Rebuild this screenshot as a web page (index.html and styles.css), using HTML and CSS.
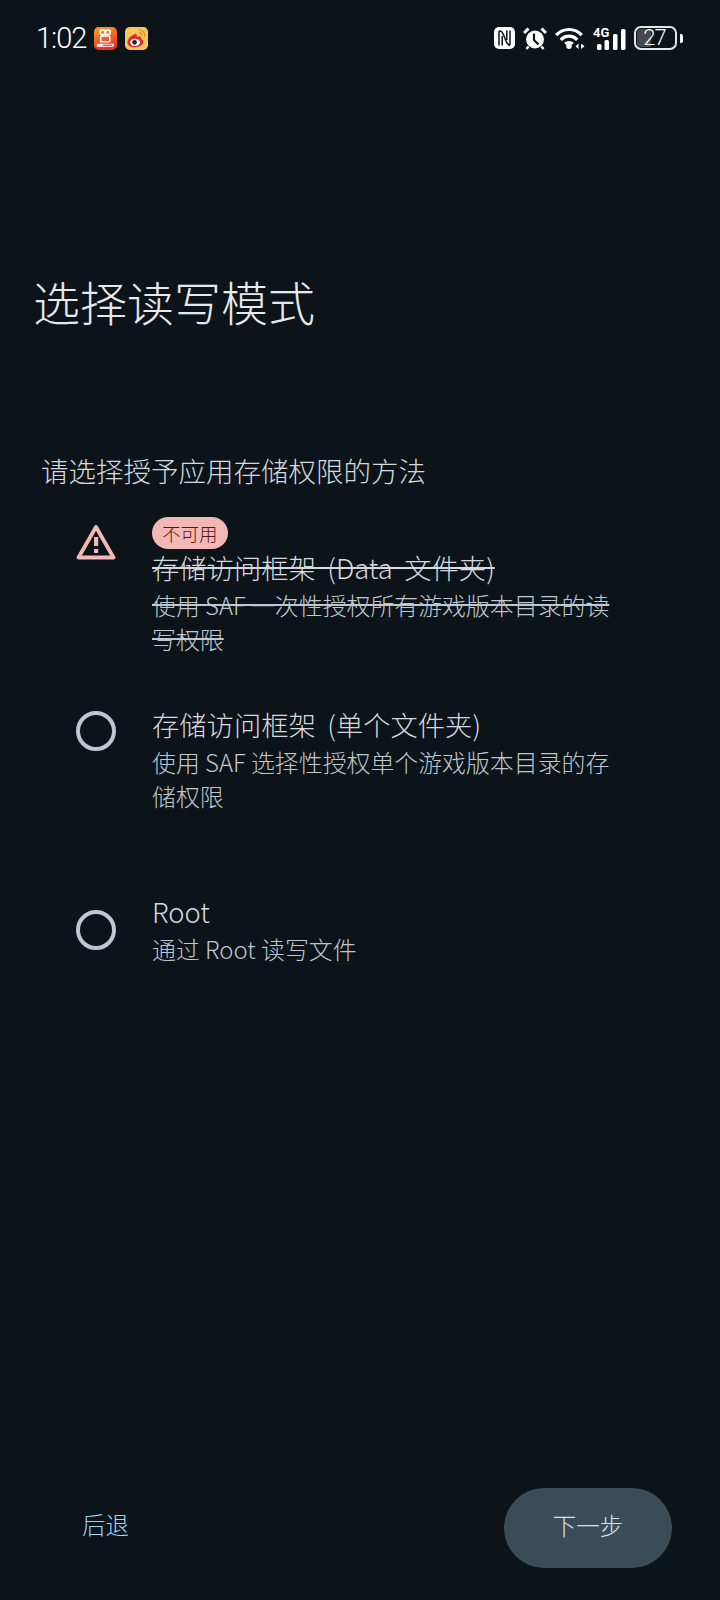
FILE: index.html
```html
<!DOCTYPE html>
<html lang="zh-CN">
<head>
<meta charset="utf-8">
<title>选择读写模式</title>
<link rel="stylesheet" href="styles.css">
</head>
<body>
<div class="screen">
  <header class="status">
    <div class="status-left">
      <span class="time">1:02</span>
      <svg class="app-icon" viewBox="0 0 24 24">
        <defs><linearGradient id="kg" x1="0" y1="0" x2="0.3" y2="1"><stop offset="0" stop-color="#f8a423"/><stop offset="1" stop-color="#e5322e"/></linearGradient></defs>
        <rect width="24" height="24" rx="5" fill="url(#kg)"/>
        <circle cx="9" cy="5.500" r="2.500" fill="none" stroke="#fff" stroke-width="1.600"/>
        <circle cx="14.500" cy="5.500" r="2.500" fill="none" stroke="#fff" stroke-width="1.600"/>
        <rect x="7" y="9.500" width="9.500" height="6" rx="1" fill="none" stroke="#fff" stroke-width="1.600"/>
        <path d="M3 17.500h18l-1 3H3z" fill="#fff"/>
        <path d="M9 19h10" stroke="#d9342c" stroke-width="1.200"/>
      </svg>
      <svg class="app-icon" viewBox="0 0 24 24">
        <rect width="24" height="24" rx="5" fill="#f7c65c"/>
        <path d="M10 7.500c-4 1.500-7.500 5-7.500 8.500 0 3.200 3.500 5.200 8 5.200s8.800-2.700 8.800-5.700c0-2-2-2.500-2.500-3 .5-1.500 0-3-3-2.500-1 .2-1.500.5-1.500-.5 0-2-.8-3-1.800-2z" fill="#e6272d"/>
        <ellipse cx="10.500" cy="16" rx="5.200" ry="3.800" fill="#fff"/>
        <circle cx="10" cy="16" r="2.400" fill="#222"/>
        <path d="M14.500 3c3.800-.2 6.800 3 6 7M14.500 6c2.200 0 3.700 1.700 3.200 3.800" fill="none" stroke="#e8921f" stroke-width="1.400"/>
      </svg>
    </div>
    <div class="status-right">
      <svg class="ic-nfc" viewBox="0 0 21 22">
        <rect width="21" height="22" rx="5" fill="#fff"/>
        <path d="M5 4v14.500M16 3.500V18M5 4c3 0 3.500 1.500 5 5l2 5c.8 2 2 4 4 4.500M8.200 9v9.500M12.800 3.500V13" fill="none" stroke="#0c1319" stroke-width="1.500"/>
      </svg>
      <svg class="ic-alarm" viewBox="0 0 24 23">
        <circle cx="12" cy="12.500" r="9" fill="#fff"/>
        <path d="M11 6.500v6.500l4.500 4.500" fill="none" stroke="#0c1319" stroke-width="2.200"/>
        <path d="M1 6 5.500 1.500M23 6 18.500 1.500" stroke="#fff" stroke-width="3" fill="none"/>
        <path d="M5.500 19.500 3.500 22M18.500 19.500l2 2.500" stroke="#fff" stroke-width="2.400" fill="none"/>
      </svg>
      <svg class="ic-wifi" viewBox="0 0 30 22">
        <path d="M1.200 8.200C8.200.6 19.800.6 26.800 8.200M5.800 12.800c4.500-4.800 11.900-4.800 16.400 0M10.300 17c2-2 5.400-2 7.400 0" fill="none" stroke="#fff" stroke-width="3.200"/>
        <circle cx="14" cy="19.300" r="2.700" fill="#fff"/>
        <path d="M23.500 16.500 20.500 19.300l3 2.700zM26 16.500l3.500 2.800L26 22z" fill="#fff"/>
      </svg>
      <div class="signal">
        <span class="net">4G</span>
        <svg class="ic-bars" viewBox="0 0 29 21">
          <rect x="0" y="15" width="4.500" height="6" rx="1.500" fill="#fff"/>
          <rect x="7.500" y="11" width="4.500" height="10" rx="1.500" fill="#fff"/>
          <rect x="16" y="5" width="4.500" height="16" rx="1.500" fill="#fff"/>
          <rect x="24" y="0" width="4.500" height="21" rx="1.500" fill="#fff"/>
        </svg>
      </div>
      <div class="battery">
        <div class="cell"><span class="level"></span><span class="pct">27</span></div>
        <span class="nub"></span>
      </div>
    </div>
  </header>

  <main class="content">
    <h1 class="title">选择读写模式</h1>
    <p class="subtitle">请选择授予应用存储权限的方法</p>
    <ul class="options">
      <li class="option disabled">
        <svg class="warn" viewBox="0 0 40 36">
          <path d="M20 3 37.500 33.500H2.500z" fill="none" stroke="#f2b8b5" stroke-width="3.800" stroke-linejoin="round"/>
          <rect x="18" y="13" width="4.200" height="9" fill="#f2b8b5"/>
          <rect x="18" y="25" width="4.200" height="4" fill="#f2b8b5"/>
        </svg>
        <div class="body">
          <span class="badge">不可用</span>
          <div class="name">存储访问框架 (Data 文件夹)</div>
          <div class="desc">使用 SAF 一次性授权所有游戏版本目录的读写权限</div>
        </div>
      </li>
      <li class="option second">
        <span class="radio"></span>
        <div class="body">
          <div class="name">存储访问框架 (单个文件夹)</div>
          <div class="desc">使用 SAF 选择性授权单个游戏版本目录的存储权限</div>
        </div>
      </li>
      <li class="option third">
        <span class="radio"></span>
        <div class="body">
          <div class="name">Root</div>
          <div class="desc">通过 Root 读写文件</div>
        </div>
      </li>
    </ul>
  </main>

  <footer class="actions">
    <button class="btn-text">后退</button>
    <button class="btn-next">下一步</button>
  </footer>
</div>
</body>
</html>
```
FILE: styles.css
```css
* { box-sizing: border-box; }
html, body { margin: 0; padding: 0; }
body { background: #0c1319; font-family: "Noto Sans CJK SC", "Noto Sans", sans-serif; color: #dee3e8; }
.screen { width: 720px; height: 1600px; display: flex; flex-direction: column; background: #0c1319; }

.status { height: 76px; flex: none; display: flex; justify-content: space-between; align-items: center; padding: 0 37px 0 36px; }
.status-left { display: flex; align-items: center; gap: 8px; }
.time { font-family: Roboto, sans-serif; font-weight: 300; font-size: 29px; letter-spacing: -1px; color: #fff; line-height: 1; }
.app-icon { width: 23px; height: 23px; }
.status-right { display: flex; align-items: center; gap: 8px; }
.ic-nfc { width: 21px; height: 22px; }
.ic-alarm { width: 24px; height: 23px; }
.ic-wifi { width: 30px; height: 22px; }
.signal { position: relative; width: 33px; height: 23px; }
.net { position: absolute; left: 0; top: -1px; font: 700 13px/13px Roboto, sans-serif; color: #fff; background: #0c1319; padding-right: 1px; z-index: 1; }
.ic-bars { position: absolute; right: 0; bottom: 0; width: 29px; height: 21px; }
.battery { display: flex; align-items: center; gap: 3px; }
.cell { position: relative; width: 43px; height: 24px; border: 2px solid #e6e6e6; border-radius: 7px; display: flex; align-items: center; justify-content: center; }
.level { position: absolute; left: 1px; top: 1px; bottom: 1px; width: 14px; background: #45494e; border-radius: 4px 0 0 4px; }
.pct { position: relative; margin-right: 2px; font: 300 22px/20px Roboto, sans-serif; letter-spacing: -1px; color: #fff; }
.nub { width: 3px; height: 9px; background: #fff; border-radius: 0 2px 2px 0; }

.content { flex: 1; }
.title { margin: 195px 0 0 33px; font-size: 47px; font-weight: 300; line-height: 60px; color: #e6e9ed; }
.subtitle { margin: 120px 0 0 41px; font-size: 27.500px; font-weight: 300; line-height: 38px; color: #d5dade; }
.options { list-style: none; margin: 28px 0 0; padding: 0; }
.option { display: flex; align-items: flex-start; padding: 0 100px 0 76px; }
.option.second { margin-top: 49px; }
.option.third { margin-top: 79px; }
.body { margin-left: 36px; flex: 1; }
.radio { width: 40px; height: 40px; flex: none; border: 4px solid #bfc8ce; border-radius: 50%; }
.second .radio { margin-top: 6px; }
.third .radio { margin-top: 18px; }
.warn { width: 40px; height: 36px; flex: none; margin-top: 7px; }
.badge { display: block; width: fit-content; height: 32px; margin-bottom: -1px; padding: 0 10px; border-radius: 16px; background: #f2b8b5; color: #601410; font-size: 18.500px; line-height: 32px; font-weight: 300; }
.name { font-size: 27.300px; font-weight: 300; line-height: 38px; word-spacing: 5.500px; color: #d5dade; margin-bottom: 2px; }
.desc { font-size: 23.900px; font-weight: 300; line-height: 34px; color: #bfc8ce; }
.disabled .name, .disabled .desc { text-decoration: line-through; }

.actions { flex: none; display: flex; justify-content: space-between; align-items: center; padding: 0 48px 32px 82px; }
.btn-text { border: 0; background: none; padding: 0 0 8px; font-family: inherit; font-size: 23.500px; font-weight: 300; color: #98d6fa; }
.btn-next { width: 168px; height: 80px; border: 0; border-radius: 40px; padding: 0 0 6px; background: #3a4c58; font-family: inherit; font-size: 23.500px; font-weight: 300; color: #d2e4ef; }
```
